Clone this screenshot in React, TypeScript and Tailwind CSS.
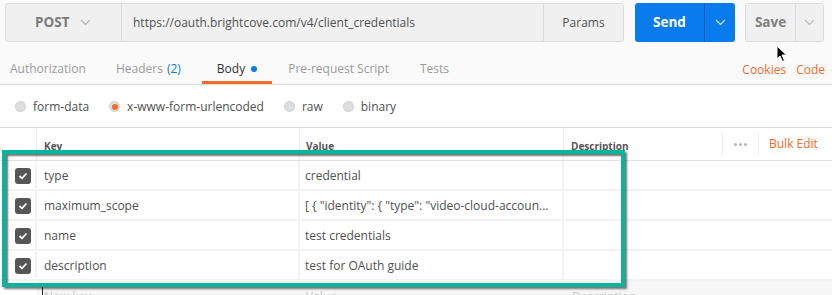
import type { ReactNode } from "react";

const font = "font-['Open_Sans','Liberation_Sans',sans-serif]";

function Chevron({ className = "" }: { className?: string }) {
  return (
    <svg width="11" height="7" viewBox="0 0 11 7" className={className}>
      <polyline points="1,1 5.5,5.5 10,1" fill="none" stroke="currentColor" strokeWidth="1.2" />
    </svg>
  );
}

function Radio({ on = false }: { on?: boolean }) {
  return (
    <span className="grid h-[11px] w-[11px] place-items-center rounded-full border border-[#cfcfcf] bg-[#dedede]">
      {on && <span className="h-[6px] w-[6px] rounded-full bg-[#f26b2a]" />}
    </span>
  );
}

function Check() {
  return (
    <span className="grid h-[16px] w-[16px] place-items-center rounded-[3px] bg-[#565656]">
      <svg width="10" height="8" viewBox="0 0 10 8">
        <polyline points="1.5,4 4,6.3 8.5,1.5" fill="none" stroke="#fff" strokeWidth="1.8" />
      </svg>
    </span>
  );
}

function Tab({ children, active = false, extra = "" }: { children: ReactNode; active?: boolean; extra?: string }) {
  return (
    <div
      className={`flex h-[30px] items-center border-b-[3px] px-[15px] pt-[3px] ${extra} ${
        active ? "border-[#f26b2a] text-[#333]" : "border-transparent text-[#9a9a9a]"
      }`}
    >
      {children}
    </div>
  );
}

const rows = [
  { k: "type", v: "credential" },
  { k: "maximum_scope", v: '[ { "identity": { "type": "video-cloud-accoun...' },
  { k: "name", v: "test credentials" },
  { k: "description", v: "test for OAuth guide" },
];

export default function App() {
  return (
    <div className={`relative h-[295px] w-[832px] overflow-hidden bg-[#fafafa] ${font}`}>
      {/* request bar */}
      <div className="flex h-[42px] items-end px-[5px]">
        <div className="flex h-[39px] w-[619px] rounded-[3px] border border-[#dcdcdc] bg-[#f0f0f0]">
          <div className="flex w-[116px] items-center border-r border-[#dcdcdc] pl-[29px] text-[#7b7b7b]">
            <span className="text-[13.5px] font-bold">POST</span>
            <Chevron className="ml-[11px] text-[#b5b5b5]" />
          </div>
          <div className="flex flex-1 items-center pl-[11px] text-[12px] text-[#505050]">
            https://oauth.brightcove.com/v4/client_credentials
          </div>
          <div className="flex w-[80px] items-center justify-center border-l border-[#dcdcdc] text-[12px] text-[#505050]">
            Params
          </div>
        </div>
        <div className="ml-[11px] flex h-[39px] w-[100px] overflow-hidden rounded-[3px] bg-[#097bed] text-white">
          <div className="flex w-[69px] items-center justify-center text-[13.5px] font-bold">Send</div>
          <div className="flex flex-1 items-center justify-center border-l border-[#0a5db5]">
            <Chevron className="text-[#cfe3fb]" />
          </div>
        </div>
        <div className="ml-[10px] flex h-[39px] w-[79px] rounded-[3px] border border-[#dcdcdc] bg-[#f0f0f0]">
          <div className="flex w-[49px] items-center justify-center text-[13.5px] font-bold text-[#808080]">Save</div>
          <div className="flex flex-1 items-center justify-center border-l border-[#dcdcdc]">
            <Chevron className="text-[#bdbdbd]" />
          </div>
        </div>
      </div>

      {/* tabs */}
      <div className="mt-[12px] flex items-end border-b border-[#dcdcdc] pr-[7px] text-[12px]">
        <div className="-ml-[5px] flex">
          <Tab>Authorization</Tab>
          <Tab extra="mr-[6px]">
            Headers <span className="ml-[4px] text-[#097bed]">(2)</span>
          </Tab>
          <Tab active>
            Body <span className="ml-[6px] h-[6px] w-[6px] rounded-full bg-[#097bed]" />
          </Tab>
          <Tab extra="ml-[1px]">Pre-request Script</Tab>
          <Tab extra="ml-[1px]">Tests</Tab>
        </div>
        <div className="ml-auto flex h-[30px] items-center gap-[10px] pt-[2px] text-[#f26b2a]">
          <span>Cookies</span>
          <span>Code</span>
        </div>
      </div>

      {/* body type */}
      <div className="flex h-[43px] items-center gap-[20px] border-b border-[#dcdcdc] bg-white pl-[15px] pt-[1px] text-[12px] text-[#505050]">
        <label className="flex items-center gap-[7px]">
          <Radio />
          form-data
        </label>
        <label className="flex items-center gap-[7px]">
          <Radio on />
          x-www-form-urlencoded
        </label>
        <label className="flex items-center gap-[7px]">
          <Radio />
          raw
        </label>
        <label className="flex items-center gap-[7px]">
          <Radio />
          binary
        </label>
      </div>

      {/* table */}
      <div className="bg-white text-[12px] text-[#505050]">
        <div className="flex h-[33px] border-b border-[#e2e2e2] text-[10px] font-bold text-[#555]">
          <div className="w-[37px] border-r border-[#eeeeee]" />
          <div className="flex w-[263px] items-center border-r border-[#eeeeee] pl-[7px] pt-[4px]">Key</div>
          <div className="flex w-[264px] items-center border-r border-[#eeeeee] pl-[6px] pt-[4px]">Value</div>
          <div className="flex flex-1 items-center pl-[7px] pt-[4px]">Description</div>
          <div className="my-[5px] flex w-[37px] items-center justify-center gap-[2px] border-x border-[#eeeeee]">
            <span className="h-[3px] w-[3px] rounded-full bg-[#b5b5b5]" />
            <span className="h-[3px] w-[3px] rounded-full bg-[#b5b5b5]" />
            <span className="h-[3px] w-[3px] rounded-full bg-[#b5b5b5]" />
          </div>
          <div className="flex w-[73px] items-center pl-[10px] text-[12px] font-normal text-[#f26b2a]">Bulk Edit</div>
        </div>
        {rows.map((r) => (
          <div key={r.k} className="flex h-[30px] border-b-2 border-[#f3f3f3]">
            <div className="flex w-[37px] items-center justify-end border-r-2 border-[#f3f3f3] pr-[4px] pt-[1px]">
              <Check />
            </div>
            <div className="flex w-[263px] items-center border-r-2 border-[#f3f3f3] pl-[7px] pt-[2px]">{r.k}</div>
            <div className="flex w-[264px] items-center border-r-2 border-[#f3f3f3] pl-[5px] pt-[2px]">{r.v}</div>
            <div className="flex-1" />
          </div>
        ))}
        <div className="flex h-[30px] text-[#c6c6c6]">
          <div className="w-[37px] bg-white" />
          <div className="relative flex w-[263px] items-center bg-[#f6f6f6] pl-[7px] pt-[2px]">
            <span className="absolute left-[5px] top-[6px] h-[14px] w-px bg-[#222]" />
            New key
          </div>
          <div className="flex w-[264px] items-center bg-[#f6f6f6] pl-[6px] pt-[2px]">Value</div>
          <div className="flex flex-1 items-center bg-[#f6f6f6] pl-[8px] pt-[2px]">Description</div>
        </div>
      </div>

      {/* highlight frame */}
      <div className="pointer-events-none absolute left-[2px] top-[150px] h-[137px] w-[623px] border-[4px] border-[#06b59b] shadow-[2px_2px_2px_rgba(0,0,0,0.55),inset_2px_2px_2px_rgba(0,0,0,0.55)]" />

      {/* mouse pointer */}
      <svg className="absolute left-[776px] top-[45px]" width="12" height="18" viewBox="0 0 12 18">
        <path d="M1 1 L1 14 L4 11 L6.5 16.5 L8.5 15.5 L6 10 L10.5 10 Z" fill="#000" stroke="#fff" strokeWidth="1" />
      </svg>
    </div>
  );
}
